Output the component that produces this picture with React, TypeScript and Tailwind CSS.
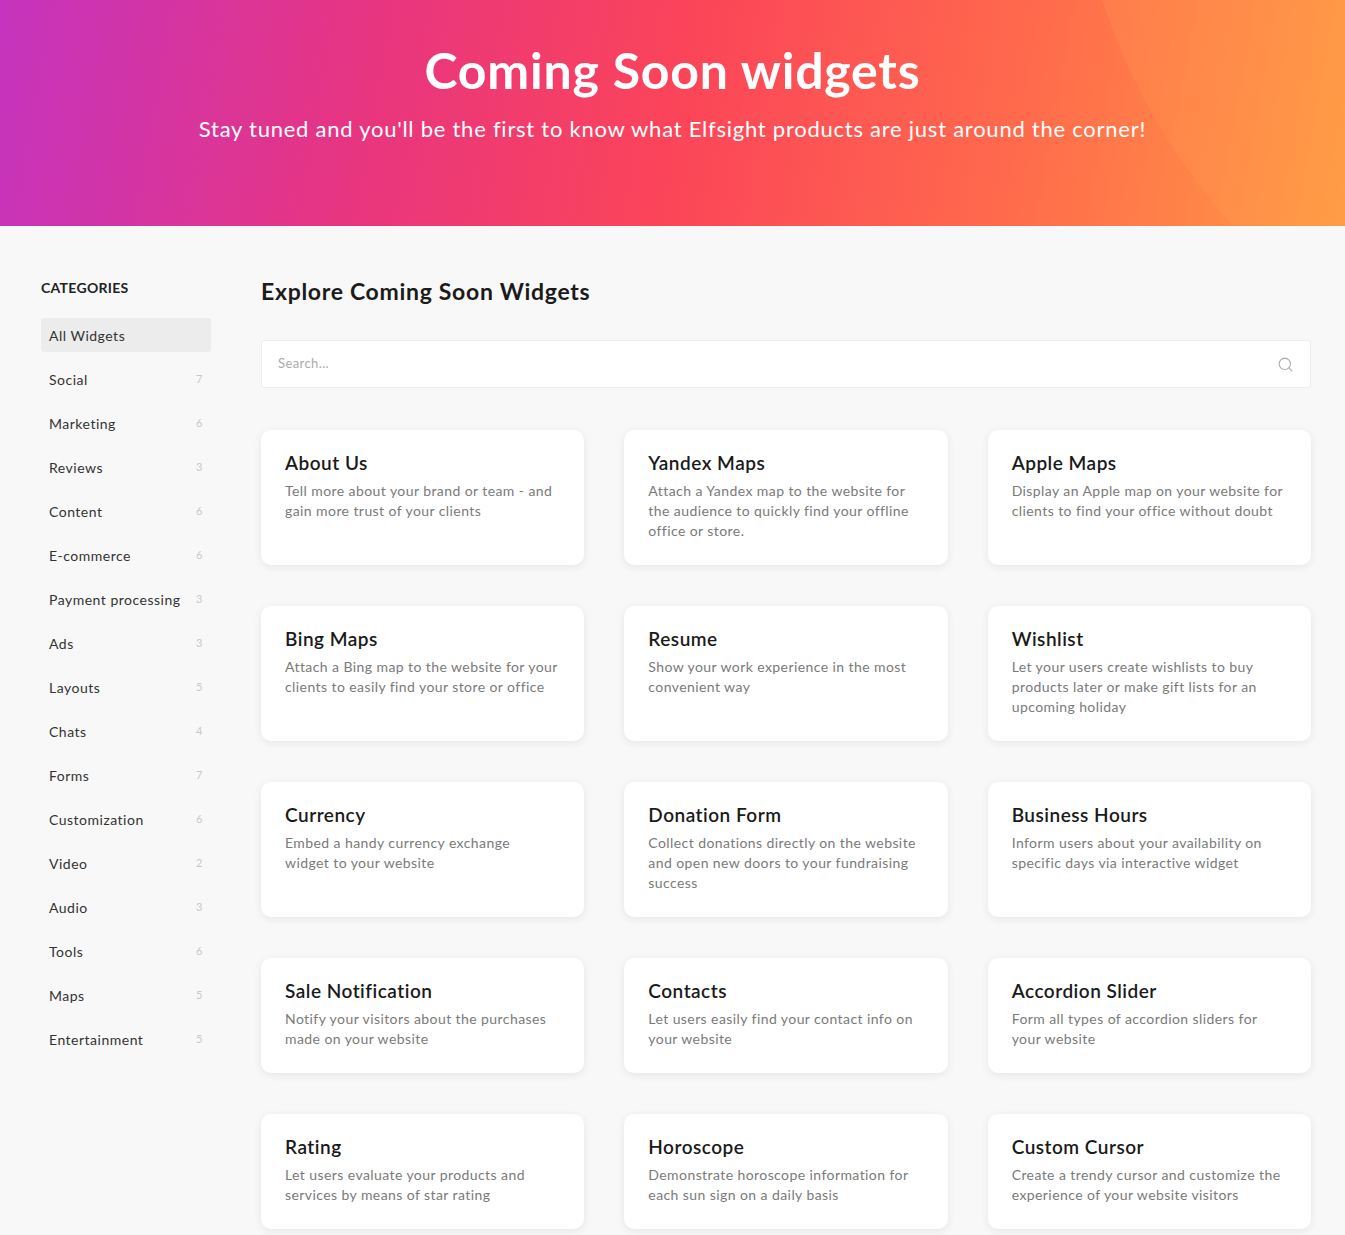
import { Search } from "lucide-react";

const categories = [
  { name: "Social", count: 7 },
  { name: "Marketing", count: 6 },
  { name: "Reviews", count: 3 },
  { name: "Content", count: 6 },
  { name: "E-commerce", count: 6 },
  { name: "Payment processing", count: 3 },
  { name: "Ads", count: 3 },
  { name: "Layouts", count: 5 },
  { name: "Chats", count: 4 },
  { name: "Forms", count: 7 },
  { name: "Customization", count: 6 },
  { name: "Video", count: 2 },
  { name: "Audio", count: 3 },
  { name: "Tools", count: 6 },
  { name: "Maps", count: 5 },
  { name: "Entertainment", count: 5 },
];

// "\n" marks a forced line break where the original wraps
const widgets = [
  { title: "About Us", text: "Tell more about your brand or team - and gain more trust of your clients" },
  { title: "Yandex Maps", text: "Attach a Yandex map to the website for the audience to quickly find your offline office or store." },
  { title: "Apple Maps", text: "Display an Apple map on your website for clients to find your office without doubt" },
  { title: "Bing Maps", text: "Attach a Bing map to the website for your clients to easily find your store or office" },
  { title: "Resume", text: "Show your work experience in the most convenient way" },
  { title: "Wishlist", text: "Let your users create wishlists to buy products later or make gift lists for an upcoming holiday" },
  { title: "Currency", text: "Embed a handy currency exchange\nwidget to your website" },
  { title: "Donation Form", text: "Collect donations directly on the website and open new doors to your fundraising success" },
  { title: "Business Hours", text: "Inform users about your availability on specific days via interactive widget" },
  { title: "Sale Notification", text: "Notify your visitors about the purchases made on your website" },
  { title: "Contacts", text: "Let users easily find your contact info on your website" },
  { title: "Accordion Slider", text: "Form all types of accordion sliders for your website" },
  { title: "Rating", text: "Let users evaluate your products and services by means of star rating" },
  { title: "Horoscope", text: "Demonstrate horoscope information for each sun sign on a daily basis" },
  { title: "Custom Cursor", text: "Create a trendy cursor and customize the experience of your website visitors" },
];

export default function App() {
  return (
    <div className="min-h-screen bg-[#f8f8f8] font-['Lato','Open_Sans',sans-serif]">
      <header className="relative h-[226px] overflow-hidden bg-[linear-gradient(100deg,#c534bf_0%,#e8357f_28%,#fb4459_50%,#ff6a4c_75%,#ff9a44_100%)]">
        {/* soft arc on the right */}
        <div className="absolute left-[1070px] top-[-840px] h-[1280px] w-[1280px] rounded-full bg-[rgba(255,175,90,0.16)]" />
        <div className="relative flex flex-col items-center pt-[40px] text-white">
          <h1 className="text-[50px] font-bold leading-[60px] tracking-[0.8px]">Coming Soon widgets</h1>
          <p className="mt-[14px] text-[22px] leading-[30px] tracking-[0.75px]">
            Stay tuned and you'll be the first to know what Elfsight products are just around the corner!
          </p>
        </div>
      </header>

      <div className="flex gap-[50px] pl-[41px] pr-[34px] pt-[48px] pb-10">
        <aside className="w-[170px] shrink-0">
          <h3 className="pt-[4px] text-[14px] font-bold leading-[20px] tracking-[0.3px] text-[#222]">CATEGORIES</h3>
          <ul className="mt-[20px] flex flex-col gap-[10px]">
            <li className="flex h-[34px] items-center rounded-[3px] bg-[#ececec] px-2 text-[14px] tracking-[0.5px] text-[#333]">
              All Widgets
            </li>
            {categories.map((c) => (
              <li
                key={c.name}
                className="flex h-[34px] items-center justify-between px-2 text-[14px] tracking-[0.5px] text-[#333]"
              >
                <span>{c.name}</span>
                <span className="text-[11px] text-[#c8c8c8]">{c.count}</span>
              </li>
            ))}
          </ul>
        </aside>

        <main className="flex-1">
          <h2 className="pt-[2px] text-[23px] font-bold leading-[30px] tracking-[0.7px] text-[#1b1b1b]">
            Explore Coming Soon Widgets
          </h2>
          <div className="mt-[34px] flex h-[48px] items-center justify-between rounded-[3px] border border-[#ececec] bg-white px-4">
            <span className="text-[13px] tracking-[0.4px] text-[#aaa]">Search...</span>
            <Search className="h-[17px] w-[17px] text-[#aaa]" strokeWidth={1.5} />
          </div>

          <div className="mt-[42px] grid grid-cols-3 gap-x-[40px] gap-y-[41px]">
            {widgets.map((w) => (
              <div
                key={w.title}
                className="rounded-[10px] bg-white px-6 pt-5 pb-6 shadow-[0_2px_8px_rgba(0,0,0,0.08)]"
              >
                <div className="text-[19px] font-semibold leading-[26px] tracking-[0.5px] text-[#1a1a1a]">{w.title}</div>
                <p className="mt-[5px] whitespace-pre-line text-[14px] leading-[20px] tracking-[0.42px] text-[#7a7a7a]">
                  {w.text}
                </p>
              </div>
            ))}
          </div>
        </main>
      </div>
    </div>
  );
}
